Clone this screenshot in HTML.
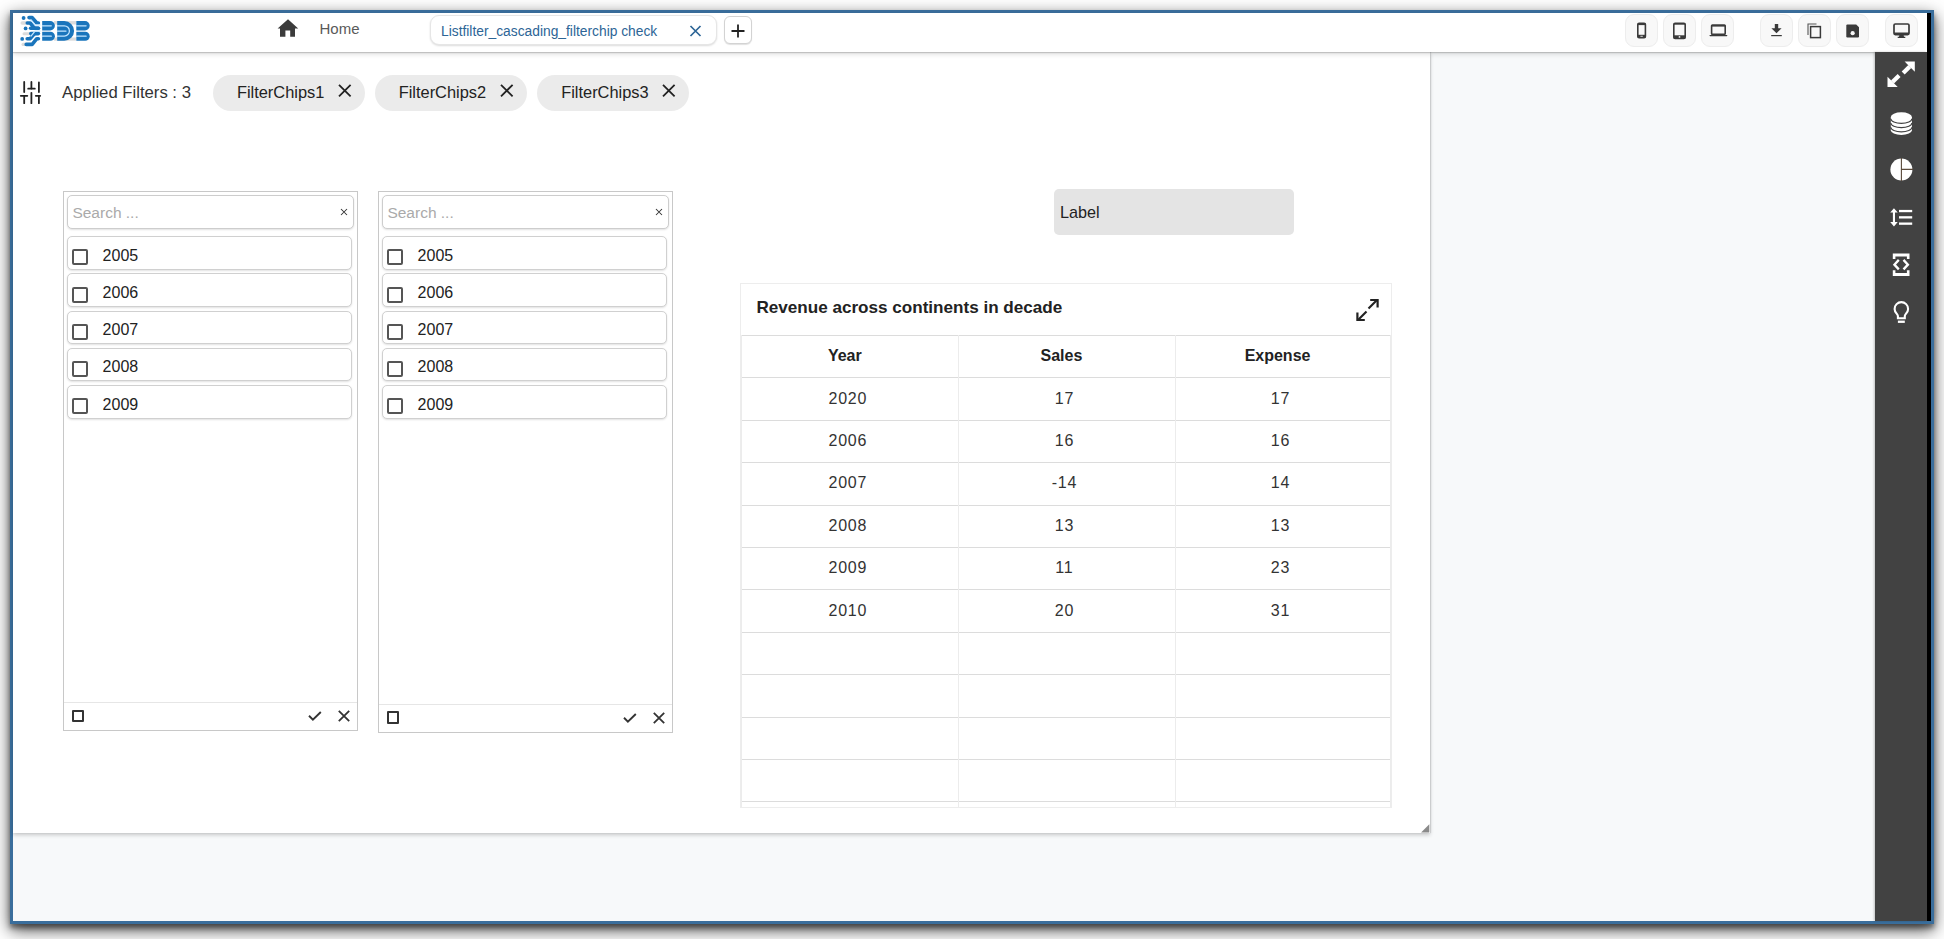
<!DOCTYPE html>
<html><head><meta charset="utf-8">
<style>
html,body{margin:0;padding:0;}
body{width:1944px;height:939px;overflow:hidden;position:relative;background:#ffffff;font-family:"Liberation Sans",sans-serif;color:#333;}
.a{position:absolute;}
.t{position:absolute;line-height:1;white-space:nowrap;}
#win{left:10px;top:10px;width:1924px;height:914px;box-sizing:border-box;border:3px solid #3a6e9c;box-shadow:0 4px 5px rgba(0,0,0,0.4), 0 6px 16px rgba(0,0,0,0.7);background:#f7f9fa;}
#hdr{left:13px;top:13px;width:1914px;height:39px;background:#fff;box-shadow:0 1px 1px rgba(0,0,0,0.16), 0 2px 5px rgba(0,0,0,0.14);z-index:2;}
#canvas{left:13px;top:52px;width:1417px;height:781px;background:#fff;box-shadow:0 2px 4px rgba(0,0,0,0.2), 1px 0 1px rgba(0,0,0,0.1);}
#side{left:1875px;top:52px;width:52px;height:869px;background:#424242;z-index:3;box-shadow:-1px 0 2px rgba(0,0,0,0.22);}
#blk{left:1927px;top:13px;width:4px;height:908px;background:#000;z-index:4;}
.hbox{position:absolute;top:14px;width:33px;height:33px;box-sizing:border-box;border:1px solid #ededed;border-radius:9px;background:#f8f8f8;z-index:3;}
.chip{position:absolute;top:75px;height:36px;width:152px;border-radius:18px;background:#ebebeb;}
.panel{position:absolute;top:191px;width:295px;height:540px;box-sizing:border-box;border:1px solid #c8c8c8;background:#fff;}
.search{position:absolute;top:195px;height:34px;box-sizing:border-box;border:1px solid #cdcdcd;border-radius:5px;box-shadow:0 1px 2px rgba(0,0,0,0.12);background:#fff;}
.item{position:absolute;height:33.5px;box-sizing:border-box;border:1px solid #d0d0d0;border-radius:5px;box-shadow:0 1px 2px rgba(0,0,0,0.12);background:#fff;}
.cb{position:absolute;width:16px;height:16px;box-sizing:border-box;border:2px solid #555;border-radius:2px;}
.hl{position:absolute;height:1px;background:#dedede;}
.vl{position:absolute;width:1px;background:#ececec;}
</style></head><body>
<div id="win" class="a"></div>
<div id="hdr" class="a"></div>
<div id="canvas" class="a"></div>
<div id="side" class="a"></div>
<div id="blk" class="a"></div>

<svg class="a" style="left:15px;top:12px;z-index:5" width="80" height="38" viewBox="0 0 80 38">
 <g fill="#dcdcdc">
  <rect x="5.5" y="9.3" width="8" height="3.4" rx="1.7"/>
  <rect x="7.5" y="20.2" width="8" height="3" rx="1.5"/>
  <rect x="6.5" y="30.8" width="6" height="3.2" rx="1.6"/>
  <rect x="39" y="9.1" width="22" height="3.4"/>
  <rect x="39" y="25.5" width="22" height="3.2"/>
 </g>
 <g fill="none" stroke="#1a75bc" stroke-width="3.6" stroke-linecap="round" stroke-linejoin="round">
  <path d="M14,5.6 H17.2 L21.8,11 H23.4"/>
  <path d="M12.3,11 H15.2 L19.5,16.2 H23.4"/>
  <path d="M15.6,16.2 H23.4"/>
  <path d="M15.8,21.6 H23.4"/>
  <path d="M12.2,26.7 H15.2 L19.5,21.6"/>
  <path d="M11.2,32.4 H17.2 L21.8,26.7 H23.4"/>
 </g>
 <g fill="#1a75bc">
  <circle cx="8.6" cy="6" r="1.9"/>
  <circle cx="10.6" cy="16.4" r="1.9"/>
  <circle cx="7.2" cy="26.9" r="1.9"/>
  <path d="M27.2,9.1 H35.2 A4.7,4.7 0 0 1 35.2,18.5 H27.2 Z"/>
  <path d="M27.2,19.7 H35.4 A4.5,4.5 0 0 1 35.4,28.7 H27.2 Z"/>
  <path d="M42.2,9.1 H49.3 A9.8,9.8 0 0 1 49.3,28.7 H42.2 Z"/>
  <path d="M61.3,9.1 H70 A4.7,4.7 0 0 1 70,18.5 H61.3 Z"/>
  <path d="M61.3,19.7 H70.2 A4.5,4.5 0 0 1 70.2,28.7 H61.3 Z"/>
 </g>
 <g fill="none" stroke="#c4e6ff" stroke-width="1.25" stroke-linecap="round">
  <path d="M27.5,13.8 H36.3"/>
  <path d="M27.5,24.2 H36.3"/>
  <path d="M42.5,13.8 H49.3 A5.1,5.1 0 0 1 49.3,24 H42.5"/>
  <path d="M42.5,19 H51"/>
  <path d="M61.6,13.8 H71.1"/>
  <path d="M61.6,24.2 H71.1"/>
  <path d="M16,8.2 L20,12.8 H25" />
  <path d="M16,24.2 L20,19.1 H25" />
 </g>
</svg>
<svg class="a" style="left:277px;top:19px;z-index:5" width="22" height="19" viewBox="0 0 22 19">
 <path fill="#3b3b3b" d="M11,0.3 L21.2,9.6 L18,9.6 L18,17.8 L13.2,17.8 L13.2,11.6 L8.4,11.6 L8.4,17.8 L3,17.8 L3,9.6 L0.6,9.6 Z"/>
</svg>
<div class="t" style="left:319.5px;top:20.6px;font-size:15px;color:#5a5a5a;z-index:5">Home</div>
<div class="a" style="left:429.5px;top:15px;width:287px;height:30px;box-sizing:border-box;border:1px solid #e6e6e6;border-radius:9px;box-shadow:0 1px 2px rgba(0,0,0,0.14);background:#fff;z-index:5"></div>
<div class="t" style="left:441px;top:24.5px;font-size:13.8px;color:#2d6596;z-index:6">Listfilter_cascading_filterchip check</div>
<svg class="a" style="left:689px;top:25px;z-index:6" width="13" height="12" viewBox="0 0 13 12"><path d="M1.5,1 L11.5,11 M11.5,1 L1.5,11" stroke="#2d6596" stroke-width="1.7"/></svg>
<div class="a" style="left:724px;top:16px;width:27.5px;height:28px;box-sizing:border-box;border:1px solid #d3d3d3;border-radius:6px;box-shadow:0 1px 1px rgba(0,0,0,0.12);background:#fff;z-index:5"></div>
<svg class="a" style="left:731px;top:23.8px;z-index:6" width="14" height="14" viewBox="0 0 14 14"><path d="M7,0.5 V13.5 M0.5,7 H13.5" stroke="#222" stroke-width="1.8"/></svg>
<div class="hbox" style="left:1625px"></div>
<div class="hbox" style="left:1663px"></div>
<div class="hbox" style="left:1701px"></div>
<div class="hbox" style="left:1760px"></div>
<div class="hbox" style="left:1798px"></div>
<div class="hbox" style="left:1836px"></div>
<div class="hbox" style="left:1885px"></div>
<svg class="a" style="left:1636px;top:22px;z-index:5" width="11" height="17" viewBox="0 0 11 17">
 <rect x="1.8" y="1.3" width="7.6" height="14.4" rx="1.3" fill="none" stroke="#3a3a3a" stroke-width="1.6"/>
 <rect x="1.8" y="1.3" width="7.6" height="1.8" fill="#3a3a3a"/><rect x="1.8" y="12.8" width="7.6" height="2.9" fill="#3a3a3a"/>
 <rect x="4.4" y="13.8" width="2.4" height="0.9" fill="#eee"/>
</svg>
<svg class="a" style="left:1672px;top:21.5px;z-index:5" width="15" height="18" viewBox="0 0 15 18">
 <rect x="1.8" y="1.3" width="11.4" height="15.2" rx="1.3" fill="none" stroke="#3a3a3a" stroke-width="1.6"/>
 <rect x="1.8" y="1.3" width="11.4" height="1.4" fill="#3a3a3a"/><rect x="1.8" y="13.3" width="11.4" height="3.2" fill="#3a3a3a"/>
 <circle cx="7.5" cy="14.9" r="0.9" fill="#eee"/>
</svg>
<svg class="a" style="left:1709px;top:23.5px;z-index:5" width="19" height="13" viewBox="0 0 19 13">
 <rect x="2.6" y="1" width="13.6" height="9.4" rx="0.8" fill="none" stroke="#3a3a3a" stroke-width="1.6"/>
 <rect x="2.6" y="1" width="13.6" height="1.6" fill="#3a3a3a"/>
 <path d="M0.3,11 H18.5 L17.8,12.3 H1 Z" fill="#3a3a3a"/>
</svg>
<svg class="a" style="left:1770px;top:23.5px;z-index:5" width="13" height="13" viewBox="0 0 13 13">
 <path d="M4.8,0 H8.2 V4.2 H11.6 L6.5,9.3 L1.4,4.2 H4.8 Z" fill="#3a3a3a"/><rect x="1.2" y="11" width="10.6" height="1.2" fill="#3a3a3a"/>
</svg>
<svg class="a" style="left:1807px;top:22.5px;z-index:5" width="15" height="16" viewBox="0 0 15 16">
 <path d="M1,12 V1 H9.5" fill="none" stroke="#555" stroke-width="1.1"/>
 <rect x="3.6" y="3.6" width="9.8" height="11" fill="none" stroke="#3a3a3a" stroke-width="1.5"/>
</svg>
<svg class="a" style="left:1846px;top:23.5px;z-index:5" width="14" height="14" viewBox="0 0 14 14">
 <path d="M0.3,1.5 Q0.3,0.4 1.4,0.4 H10.2 L13,3.2 V12.2 Q13,13.4 11.9,13.4 H1.4 Q0.3,13.4 0.3,12.2 Z" fill="#3a3a3a"/>
 
 <circle cx="6.65" cy="9.2" r="2.1" fill="#f8f8f8"/>
</svg>
<svg class="a" style="left:1893px;top:22.5px;z-index:5" width="17" height="16" viewBox="0 0 17 16">
 <rect x="1" y="1" width="15" height="10.6" rx="1.3" fill="none" stroke="#3a3a3a" stroke-width="1.7"/>
 <rect x="1" y="9.5" width="15" height="2.2" fill="#3a3a3a"/>
 <path d="M6.5,11.5 H10.5 L11,13.7 H12.3 V15 H4.7 V13.7 H6 Z" fill="#3a3a3a"/>
</svg>


<svg class="a" style="left:19px;top:80px" width="24" height="25" viewBox="0 0 24 25">
 <g stroke="#222" stroke-width="1.8" stroke-linecap="round" fill="none">
  <path d="M5.2,2 V12"/><path d="M1.8,15.8 H8.3"/><path d="M5.2,15.8 V23.2"/>
  <path d="M12.4,2 V8.6"/><path d="M9.2,8.7 H15.8"/><path d="M12.4,12.8 V23.2"/>
  <path d="M19.9,2.4 V12"/><path d="M16.8,15.8 H21.2"/><path d="M19.9,15.8 V23.2"/>
 </g>
</svg>
<div class="t" style="left:62px;top:84.6px;font-size:16.7px;color:#333">Applied Filters : 3</div>
<div class="chip" style="left:212.5px"></div>
<div class="chip" style="left:375.3px"></div>
<div class="chip" style="left:537.3px"></div>
<div class="t" style="left:236.9px;top:84.3px;font-size:16.4px;color:#222">FilterChips1</div>
<div class="t" style="left:398.7px;top:84.3px;font-size:16.4px;color:#222">FilterChips2</div>
<div class="t" style="left:561.2px;top:84.3px;font-size:16.4px;color:#222">FilterChips3</div>
<svg class="a" style="left:338px;top:83.6px" width="14" height="13" viewBox="0 0 14 13"><path d="M1,0.8 L12.6,12.3 M12.6,0.8 L1,12.3" stroke="#222" stroke-width="1.8"/></svg>
<svg class="a" style="left:500px;top:83.6px" width="14" height="13" viewBox="0 0 14 13"><path d="M1,0.8 L12.6,12.3 M12.6,0.8 L1,12.3" stroke="#222" stroke-width="1.8"/></svg>
<svg class="a" style="left:662px;top:83.6px" width="14" height="13" viewBox="0 0 14 13"><path d="M1,0.8 L12.6,12.3 M12.6,0.8 L1,12.3" stroke="#222" stroke-width="1.8"/></svg>

<div class="panel" style="left:63.3px;height:540px"></div>
<div class="search" style="left:67.3px;width:286.5px"></div>
<div class="t" style="left:72.4px;top:205.2px;font-size:15.5px;color:#aaa">Search ...</div>
<svg class="a" style="left:339.6px;top:207.5px" width="8" height="8" viewBox="0 0 8 8"><path d="M1,1 L7,7 M7,1 L1,7" stroke="#333" stroke-width="1.05"/></svg>
<div class="item" style="left:67.3px;top:236.10px;width:284.5px"></div>
<div class="cb" style="left:71.5px;top:249.40px"></div>
<div class="t" style="left:102.6px;top:247.50px;font-size:16px;color:#222">2005</div>
<div class="item" style="left:67.3px;top:273.35px;width:284.5px"></div>
<div class="cb" style="left:71.5px;top:286.65px"></div>
<div class="t" style="left:102.6px;top:284.75px;font-size:16px;color:#222">2006</div>
<div class="item" style="left:67.3px;top:310.60px;width:284.5px"></div>
<div class="cb" style="left:71.5px;top:323.90px"></div>
<div class="t" style="left:102.6px;top:322.00px;font-size:16px;color:#222">2007</div>
<div class="item" style="left:67.3px;top:347.85px;width:284.5px"></div>
<div class="cb" style="left:71.5px;top:361.15px"></div>
<div class="t" style="left:102.6px;top:359.25px;font-size:16px;color:#222">2008</div>
<div class="item" style="left:67.3px;top:385.10px;width:284.5px"></div>
<div class="cb" style="left:71.5px;top:398.40px"></div>
<div class="t" style="left:102.6px;top:396.50px;font-size:16px;color:#222">2009</div>
<div class="a" style="left:64.3px;top:702.3px;width:293px;height:1px;background:#e6e6e6"></div>
<div class="a" style="left:71.8px;top:709.5px;width:12.5px;height:12.5px;box-sizing:border-box;border:2px solid #333;border-radius:1px"></div>
<svg class="a" style="left:308.3px;top:711.3px" width="14" height="10" viewBox="0 0 14 10"><path d="M1,4.8 L4.9,8.6 L12.8,1" fill="none" stroke="#333" stroke-width="1.9"/></svg>
<svg class="a" style="left:337.8px;top:710.3px" width="12" height="12" viewBox="0 0 12 12"><path d="M0.8,0.8 L11.2,11.2 M11.2,0.8 L0.8,11.2" stroke="#333" stroke-width="1.8"/></svg>
<div class="panel" style="left:378.3px;height:541.5px"></div>
<div class="search" style="left:382.3px;width:286.5px"></div>
<div class="t" style="left:387.4px;top:205.2px;font-size:15.5px;color:#aaa">Search ...</div>
<svg class="a" style="left:654.6px;top:207.5px" width="8" height="8" viewBox="0 0 8 8"><path d="M1,1 L7,7 M7,1 L1,7" stroke="#333" stroke-width="1.05"/></svg>
<div class="item" style="left:382.3px;top:236.10px;width:284.5px"></div>
<div class="cb" style="left:386.5px;top:249.40px"></div>
<div class="t" style="left:417.6px;top:247.50px;font-size:16px;color:#222">2005</div>
<div class="item" style="left:382.3px;top:273.35px;width:284.5px"></div>
<div class="cb" style="left:386.5px;top:286.65px"></div>
<div class="t" style="left:417.6px;top:284.75px;font-size:16px;color:#222">2006</div>
<div class="item" style="left:382.3px;top:310.60px;width:284.5px"></div>
<div class="cb" style="left:386.5px;top:323.90px"></div>
<div class="t" style="left:417.6px;top:322.00px;font-size:16px;color:#222">2007</div>
<div class="item" style="left:382.3px;top:347.85px;width:284.5px"></div>
<div class="cb" style="left:386.5px;top:361.15px"></div>
<div class="t" style="left:417.6px;top:359.25px;font-size:16px;color:#222">2008</div>
<div class="item" style="left:382.3px;top:385.10px;width:284.5px"></div>
<div class="cb" style="left:386.5px;top:398.40px"></div>
<div class="t" style="left:417.6px;top:396.50px;font-size:16px;color:#222">2009</div>
<div class="a" style="left:379.3px;top:703.8px;width:293px;height:1px;background:#e6e6e6"></div>
<div class="a" style="left:386.8px;top:711.0px;width:12.5px;height:12.5px;box-sizing:border-box;border:2px solid #333;border-radius:1px"></div>
<svg class="a" style="left:623.3px;top:712.8px" width="14" height="10" viewBox="0 0 14 10"><path d="M1,4.8 L4.9,8.6 L12.8,1" fill="none" stroke="#333" stroke-width="1.9"/></svg>
<svg class="a" style="left:652.8px;top:711.8px" width="12" height="12" viewBox="0 0 12 12"><path d="M0.8,0.8 L11.2,11.2 M11.2,0.8 L0.8,11.2" stroke="#333" stroke-width="1.8"/></svg>


<div class="a" style="left:1054px;top:189px;width:240px;height:45.6px;border-radius:5px;background:#e4e4e4"></div>
<div class="t" style="left:1060px;top:204.2px;font-size:16.2px;color:#222">Label</div>

<div class="a" style="left:739.5px;top:283.2px;width:652px;height:525px;box-sizing:border-box;border:1px solid #ededed;background:#fff"></div>
<div class="t" style="left:756.4px;top:299.3px;font-size:17.1px;font-weight:bold;color:#222">Revenue across continents in decade</div>
<svg class="a" style="left:1355px;top:297px" width="25" height="26" viewBox="0 0 25 26">
 <g fill="none" stroke="#222" stroke-width="2.2" stroke-linecap="butt">
  <path d="M13.5,11.5 L22,3"/><path d="M15.2,3 H22.6 V10.4"/>
  <path d="M11.5,14.5 L3,23"/><path d="M2.4,15.6 V23 H9.8"/>
 </g></svg>
<div class="hl" style="left:741.4px;top:335.3px;width:649.1px;background:#dcdcdc"></div>
<div class="hl" style="left:741.4px;top:377.3px;width:649.1px;background:#dcdcdc"></div>
<div class="hl" style="left:741.4px;top:419.7px;width:649.1px;background:#dcdcdc"></div>
<div class="hl" style="left:741.4px;top:462.1px;width:649.1px;background:#dcdcdc"></div>
<div class="hl" style="left:741.4px;top:504.5px;width:649.1px;background:#dcdcdc"></div>
<div class="hl" style="left:741.4px;top:546.9px;width:649.1px;background:#dcdcdc"></div>
<div class="hl" style="left:741.4px;top:589.3px;width:649.1px;background:#dcdcdc"></div>
<div class="hl" style="left:741.4px;top:631.7px;width:649.1px;background:#dcdcdc"></div>
<div class="hl" style="left:741.4px;top:674.1px;width:649.1px;background:#dcdcdc"></div>
<div class="hl" style="left:741.4px;top:716.5px;width:649.1px;background:#dcdcdc"></div>
<div class="hl" style="left:741.4px;top:758.9px;width:649.1px;background:#dcdcdc"></div>
<div class="hl" style="left:741.4px;top:801.3px;width:649.1px;background:#dcdcdc"></div>
<div class="vl" style="left:741.4px;top:335.3px;height:472px"></div>
<div class="vl" style="left:958.3px;top:335.3px;height:472px"></div>
<div class="vl" style="left:1174.6px;top:335.3px;height:472px"></div>
<div class="vl" style="left:1390px;top:335.3px;height:472px"></div>
<div class="t" style="left:741.4px;width:206.9px;text-align:center;top:348.4px;font-size:16px;font-weight:bold;color:#222">Year</div>
<div class="t" style="left:958.3px;width:206.3px;text-align:center;top:348.4px;font-size:16px;font-weight:bold;color:#222">Sales</div>
<div class="t" style="left:1174.6px;width:205.9px;text-align:center;top:348.4px;font-size:16px;font-weight:bold;color:#222">Expense</div>
<div class="t" style="left:741.4px;width:212.9px;text-align:center;top:390.6px;font-size:16px;letter-spacing:0.8px;color:#333">2020</div>
<div class="t" style="left:958.3px;width:212.3px;text-align:center;top:390.6px;font-size:16px;letter-spacing:0.8px;color:#333">17</div>
<div class="t" style="left:1174.6px;width:211.9px;text-align:center;top:390.6px;font-size:16px;letter-spacing:0.8px;color:#333">17</div>
<div class="t" style="left:741.4px;width:212.9px;text-align:center;top:433.0px;font-size:16px;letter-spacing:0.8px;color:#333">2006</div>
<div class="t" style="left:958.3px;width:212.3px;text-align:center;top:433.0px;font-size:16px;letter-spacing:0.8px;color:#333">16</div>
<div class="t" style="left:1174.6px;width:211.9px;text-align:center;top:433.0px;font-size:16px;letter-spacing:0.8px;color:#333">16</div>
<div class="t" style="left:741.4px;width:212.9px;text-align:center;top:475.4px;font-size:16px;letter-spacing:0.8px;color:#333">2007</div>
<div class="t" style="left:958.3px;width:212.3px;text-align:center;top:475.4px;font-size:16px;letter-spacing:0.8px;color:#333">-14</div>
<div class="t" style="left:1174.6px;width:211.9px;text-align:center;top:475.4px;font-size:16px;letter-spacing:0.8px;color:#333">14</div>
<div class="t" style="left:741.4px;width:212.9px;text-align:center;top:517.8px;font-size:16px;letter-spacing:0.8px;color:#333">2008</div>
<div class="t" style="left:958.3px;width:212.3px;text-align:center;top:517.8px;font-size:16px;letter-spacing:0.8px;color:#333">13</div>
<div class="t" style="left:1174.6px;width:211.9px;text-align:center;top:517.8px;font-size:16px;letter-spacing:0.8px;color:#333">13</div>
<div class="t" style="left:741.4px;width:212.9px;text-align:center;top:560.2px;font-size:16px;letter-spacing:0.8px;color:#333">2009</div>
<div class="t" style="left:958.3px;width:212.3px;text-align:center;top:560.2px;font-size:16px;letter-spacing:0.8px;color:#333">11</div>
<div class="t" style="left:1174.6px;width:211.9px;text-align:center;top:560.2px;font-size:16px;letter-spacing:0.8px;color:#333">23</div>
<div class="t" style="left:741.4px;width:212.9px;text-align:center;top:602.6px;font-size:16px;letter-spacing:0.8px;color:#333">2010</div>
<div class="t" style="left:958.3px;width:212.3px;text-align:center;top:602.6px;font-size:16px;letter-spacing:0.8px;color:#333">20</div>
<div class="t" style="left:1174.6px;width:211.9px;text-align:center;top:602.6px;font-size:16px;letter-spacing:0.8px;color:#333">31</div>

<svg class="a" style="left:1875px;top:52px;z-index:6" width="52" height="290" viewBox="1875 52 52 290">
 <g fill="#fff">
  <path d="M1904.6,61.6 H1914.8 V71.8 Z"/>
  <path d="M1887.5,76.8 V87 H1897.7 Z"/>
 </g>
 <g stroke="#fff" stroke-width="4.2" fill="none">
  <path d="M1909.8,66.5 L1903.2,73.1"/>
  <path d="M1892.5,82.1 L1899.1,75.5"/>
 </g>
 <g fill="#fff">
  <ellipse cx="1901.35" cy="117" rx="10.55" ry="4.7"/>
  <path d="M1890.8,117 V130.3 A10.55,4.6 0 0 0 1911.9,130.3 V117 Z"/>
 </g>
 <g stroke="#424242" stroke-width="1.2" fill="none">
  <path d="M1890.8,118.8 A10.55,4.6 0 0 0 1911.9,118.8"/>
  <path d="M1890.8,123 A10.55,4.6 0 0 0 1911.9,123"/>
  <path d="M1890.8,127.2 A10.55,4.6 0 0 0 1911.9,127.2"/>
 </g>
 <circle cx="1901.4" cy="169.45" r="11" fill="#fff"/>
 <path d="M1901.4,158 V181 M1901.4,169.4 H1913" stroke="#5a4a3a" stroke-width="1.1"/>
 <g fill="#fff">
  <path d="M1893.95,208.2 L1897.7,212.6 H1895 V222 H1897.7 L1893.95,226.4 L1890.2,222 H1892.9 V212.6 H1890.2 Z"/>
  <rect x="1899" y="209.9" width="13.2" height="2.3"/>
  <rect x="1899" y="216.2" width="13.2" height="2.3"/>
  <rect x="1899" y="222.5" width="13.2" height="2.3"/>
 </g>
 <g fill="#fff">
  <path d="M1892.8,253.4 H1909.5 V259 H1906.9 V256.4 H1895.4 V259 H1892.8 Z"/>
  <path d="M1892.8,275.9 H1909.5 V270.3 H1906.9 V272.9 H1895.4 V270.3 H1892.8 Z"/>
 </g>
 <g stroke="#fff" stroke-width="2.3" fill="none" stroke-linejoin="miter">
  <path d="M1898.8,259.9 L1894.4,264.65 L1898.8,269.4"/>
  <path d="M1903.5,259.9 L1907.9,264.65 L1903.5,269.4"/>
 </g>
 <g stroke="#fff" stroke-width="2.1" fill="none">
  <path d="M1897.9,318.2 V316 C1897.9,314 1894.6,312.8 1894.6,308.9 A6.75,6.75 0 0 1 1908.1,308.9 C1908.1,312.8 1904.8,314 1904.8,316 V318.2 Z"/>
 </g>
 <rect x="1897.9" y="320.6" width="6.9" height="2.3" fill="#fff"/>
</svg>
<svg class="a" style="left:1420px;top:823px;z-index:3" width="10" height="10" viewBox="0 0 10 10"><path d="M9.3,1.2 V9.4 H1.1 Z" fill="#8a8a8a"/></svg>

</body></html>
